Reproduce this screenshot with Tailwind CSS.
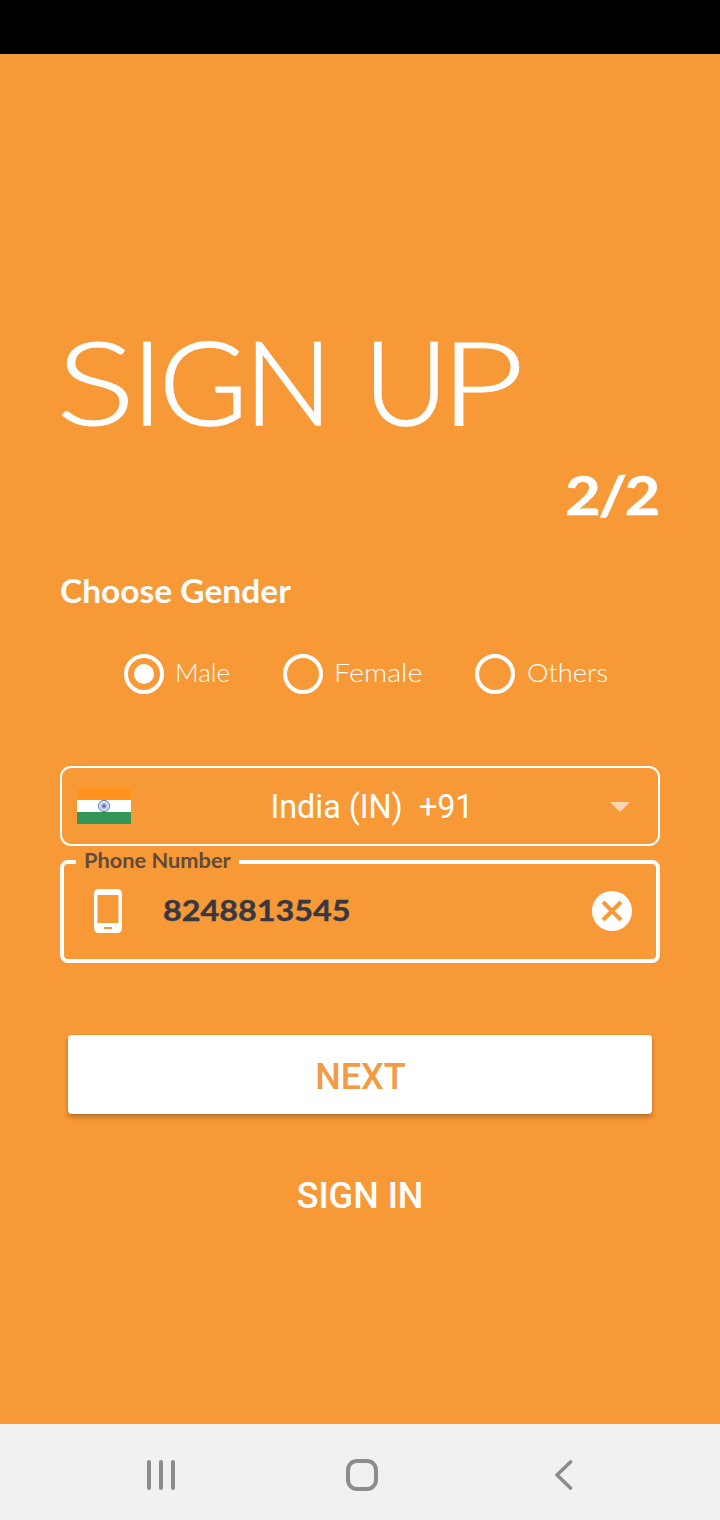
<!DOCTYPE html>
<html lang="en">
<head>
<meta charset="utf-8">
<title>Sign up</title>
<script src="https://cdn.jsdelivr.net/npm/@tailwindcss/browser@4"></script>
</head>
<body class="flex h-[1520px] w-[720px] flex-col overflow-hidden bg-[#f89937] font-['Lato',sans-serif] text-white">
  <div class="h-[54px] shrink-0 bg-black"></div>
  <main class="flex h-[1370px] shrink-0 flex-col px-[60px] pt-[257px]">
    <h1 class="h-[140px] whitespace-nowrap text-[116px] leading-[140px] font-light [-webkit-text-stroke:1.6px_white]"><span class="-ml-[4px] mr-[14px] inline-block origin-left scale-x-[1.28] [-webkit-text-stroke:1px_white]">S</span><span class="-mr-[3px] inline-block">I</span><span class="inline-block origin-left scale-x-[1.04]">G</span><span class="inline-block">N</span> <span class="-mr-[8px] inline-block">U</span><span class="inline-block origin-left scale-x-[1.26] [-webkit-text-stroke:0.9px_white]">P</span></h1>
    <div class="mt-3 h-16 pr-px text-right text-[54px] leading-[64px] font-bold [-webkit-text-stroke:0.6px_white]"><span class="mr-px inline-block origin-right scale-x-[1.13] tracking-[-2px]">2/2</span></div>
    <h2 class="mt-[43px] h-10 text-[32px] leading-[41px] font-bold"><span class="inline-block origin-left scale-x-[1.047]">Choose Gender</span></h2>
    <div class="mt-11 flex h-10 pl-16 text-[25px] leading-[36px] font-light">
      <label class="flex w-[159px] gap-[11px]"><span class="flex size-10 shrink-0 items-center justify-center rounded-full border-4 border-white"><span class="size-5 rounded-full bg-white"></span></span><span class="inline-block origin-left scale-x-[1.04]">Male</span></label>
      <label class="flex w-[192px] gap-[11px]"><span class="size-10 shrink-0 rounded-full border-4 border-white"></span><span class="inline-block origin-left scale-x-[1.15]">Female</span></label>
      <label class="flex gap-3"><span class="size-10 shrink-0 rounded-full border-4 border-white"></span><span class="inline-block origin-left scale-x-[1.09]">Others</span></label>
    </div>
    <div class="mt-[72px] flex h-20 shrink-0 items-center rounded-[11px] border-2 border-white pr-7 pl-[15px] font-['Roboto',sans-serif]">
      <svg class="h-9 w-[54px]" viewBox="0 0 54 36"><path fill="#ff931e" d="M0 0h54v12H0z"/><path fill="#fff" d="M0 12h54v12H0z"/><path fill="#339657" d="M0 24h54v12H0z"/><circle cx="27" cy="18" r="5.500" fill="#e4e9f5" stroke="#5871b5"/><circle cx="27" cy="18" r="3.300" fill="#afbbdd"/><circle cx="27" cy="18" r="1.500" fill="#4560a8"/></svg>
      <div class="flex-1 pt-0.5 pl-[3px] text-center text-[32.3px] leading-10 whitespace-pre">India (IN)  +91</div>
      <svg class="mt-0.5 h-2.5 w-5" viewBox="0 0 20 10"><path fill="#fcd6af" d="M0 0h20L10 10z"/></svg>
    </div>
    <div class="relative mt-3.5 flex h-[103px] shrink-0 items-center rounded-[8px] border-4 border-white pr-6 pb-0.5 pl-[30px]">
      <span class="absolute -top-4 left-3 h-7 w-[163px] bg-[#f89937] pl-2 text-[21px] leading-6 font-bold whitespace-nowrap text-[#634939]"><span class="inline-block origin-left scale-x-[1.037]">Phone Number</span></span>
      <svg class="h-11 w-7" viewBox="0 0 28 44"><path fill="#fff" fill-rule="evenodd" d="M5 0h18q5 0 5 5v34q0 5-5 5H5q-5 0-5-5V5q0-5 5-5zM3.500 6v28h21V6zM10 38v2h8v-2z"/></svg>
      <span class="ml-[41px] flex-1 pb-px text-[28px] leading-8 font-bold text-[#373842] [-webkit-text-stroke:0.4px_#373842]"><span class="inline-block origin-left scale-x-[1.155]">8248813545</span></span>
      <svg class="size-10" viewBox="0 0 40 40"><circle cx="20" cy="20" r="20" fill="#fff"/><path d="m11 11 18 18m0-18-18 18" stroke="#f89937" stroke-width="4"/></svg>
    </div>
    <button class="mx-2 mt-[72px] h-[79px] shrink-0 rounded-[4px] bg-white pt-[3px] pl-px font-['Roboto',sans-serif] text-[36px] leading-[79px] font-medium text-[#f29b42] shadow-[0_3px_5px_rgba(0,0,0,0.28)]">NEXT</button>
    <button class="mt-[62px] h-10 font-['Roboto',sans-serif] text-[36px] leading-10 font-medium">SIGN IN</button>
  </main>
  <nav class="flex h-24 shrink-0 items-center bg-[#f1f1f1] pt-1.5 pl-[147px]">
    <svg class="h-[30px] w-7" viewBox="0 0 28 30" fill="none" stroke="#8c8c8c" stroke-width="4" stroke-linecap="round"><path d="M2 2v26M14 2v26M26 2v26"/></svg>
    <svg class="ml-[171px] size-8" viewBox="0 0 32 32" fill="none" stroke="#8c8c8c" stroke-width="4"><rect x="2" y="2" width="28" height="28" rx="9"/></svg>
    <svg class="ml-[177px] h-[30px] w-[18px]" viewBox="0 0 18 30" fill="none" stroke="#8c8c8c" stroke-width="3.600" stroke-linecap="round"><path d="M15.500 2 2 15l13.500 13"/></svg>
  </nav>
</body>
</html>
